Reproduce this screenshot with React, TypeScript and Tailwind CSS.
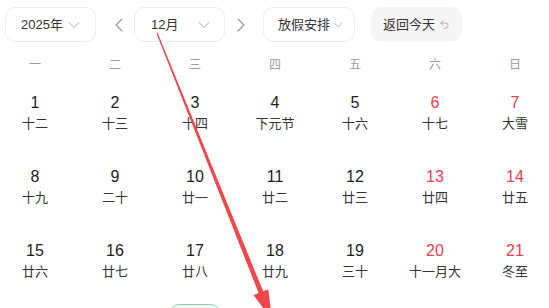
import { ChevronDown, Undo2 } from "lucide-react";

type Day = { n: number; lunar: string; off?: boolean; today?: boolean };

const weekdays = ["一", "二", "三", "四", "五", "六", "日"];

const days: Day[] = [
  { n: 1, lunar: "十二" },
  { n: 2, lunar: "十三" },
  { n: 3, lunar: "十四" },
  { n: 4, lunar: "下元节" },
  { n: 5, lunar: "十六" },
  { n: 6, lunar: "十七", off: true },
  { n: 7, lunar: "大雪", off: true },
  { n: 8, lunar: "十九" },
  { n: 9, lunar: "二十" },
  { n: 10, lunar: "廿一" },
  { n: 11, lunar: "廿二" },
  { n: 12, lunar: "廿三" },
  { n: 13, lunar: "廿四", off: true },
  { n: 14, lunar: "廿五", off: true },
  { n: 15, lunar: "廿六" },
  { n: 16, lunar: "廿七" },
  { n: 17, lunar: "廿八" },
  { n: 18, lunar: "廿九" },
  { n: 19, lunar: "三十" },
  { n: 20, lunar: "十一月大", off: true },
  { n: 21, lunar: "冬至", off: true },
  { n: 22, lunar: "初三" },
  { n: 23, lunar: "初四" },
  { n: 24, lunar: "初五", today: true },
  { n: 25, lunar: "初六" },
  { n: 26, lunar: "初七" },
  { n: 27, lunar: "初八", off: true },
  { n: 28, lunar: "初九", off: true },
  { n: 29, lunar: "初十" },
  { n: 30, lunar: "十一" },
  { n: 31, lunar: "十二" },
];

const Arrow = ({ dir }: { dir: "left" | "right" }) => (
  <svg width="10" height="14" viewBox="0 0 10 14" fill="none">
    <polyline
      points={dir === "left" ? "8,1 2,7 8,13" : "2,1 8,7 2,13"}
      stroke="#9a9a9a"
      strokeWidth="1.3"
      strokeLinecap="round"
      strokeLinejoin="round"
    />
  </svg>
);

const Select = ({ label, className }: { label: string; className: string }) => (
  <div
    className={`flex h-[35px] items-center justify-between rounded-[10px] border border-[#ececec] bg-white text-[13px] text-[#333] ${className}`}
  >
    <span>{label}</span>
    <ChevronDown size={20} strokeWidth={1.2} color="#a5a5a5" />
  </div>
);

export default function App() {
  return (
    <div
      className="relative min-h-screen w-full overflow-hidden bg-white"
      style={{ fontFamily: '"Liberation Sans", "Noto Sans CJK SC", sans-serif' }}
    >
      <div className="flex items-center pl-[5px] pt-[7px]">
        <Select label="2025年" className="w-[91px] pl-[15px] pr-[11px]" />
        <button className="ml-[11px] mr-[3px] flex w-[24px] justify-center">
          <Arrow dir="left" />
        </button>
        <Select label="12月" className="w-[91px] pl-[16px] pr-[10px]" />
        <button className="ml-[4px] mr-[10px] flex w-[24px] justify-center">
          <Arrow dir="right" />
        </button>
        <div className="flex h-[35px] w-[92px] items-center justify-between rounded-[10px] border border-[#ececec] pl-[14px] pr-[9px] text-[13px] text-[#333]">
          <span>放假安排</span>
          <ChevronDown size={14} strokeWidth={1.4} color="#a5a5a5" />
        </div>
        <div className="ml-[16px] flex h-[35px] w-[91px] items-center gap-[4px] rounded-[10px] bg-[#f5f5f5] pl-[12px] text-[13px] text-[#333]">
          <span>返回今天</span>
          <Undo2 size={11} strokeWidth={1.8} color="#a0a0a0" />
        </div>
      </div>

      <div className="mt-[11px] grid w-[550px] grid-cols-7 gap-x-[10px]">
        {weekdays.map((w) => (
          <div key={w} className="flex h-[24px] items-center justify-center text-[12px] text-[#9b9b9b]">
            {w}
          </div>
        ))}
      </div>

      <div className="mt-[5px] grid w-[550px] grid-cols-7 gap-x-[10px] gap-y-[14px]">
        {days.map((d) => (
          <div key={d.n} className="flex justify-center">
            <div
              className={`flex h-[60px] w-[50px] flex-col items-center pt-[11px] ${
                d.today ? "rounded-[9px] border border-[#86d0aa] bg-[#f3fbf6]" : ""
              }`}
            >
              <span
                className={`text-[16px] leading-[20px] ${d.off ? "text-[#e8404c]" : "text-[#1c1c1c]"}`}
              >
                {d.n}
              </span>
              <span className="mt-[2px] whitespace-nowrap text-[13px] leading-[17px] text-[#333]">
                {d.lunar}
              </span>
            </div>
          </div>
        ))}
      </div>

      <svg
        className="pointer-events-none absolute left-0 top-0"
        width="549"
        height="308"
        viewBox="0 0 549 308"
      >
        <polygon
          points="157.6,32.8 263.2,291.3 268.3,289.2 272,320 253.5,295.2 258.6,293.1 156.4,33.2"
          fill="#f0484a"
        />
      </svg>
    </div>
  );
}
